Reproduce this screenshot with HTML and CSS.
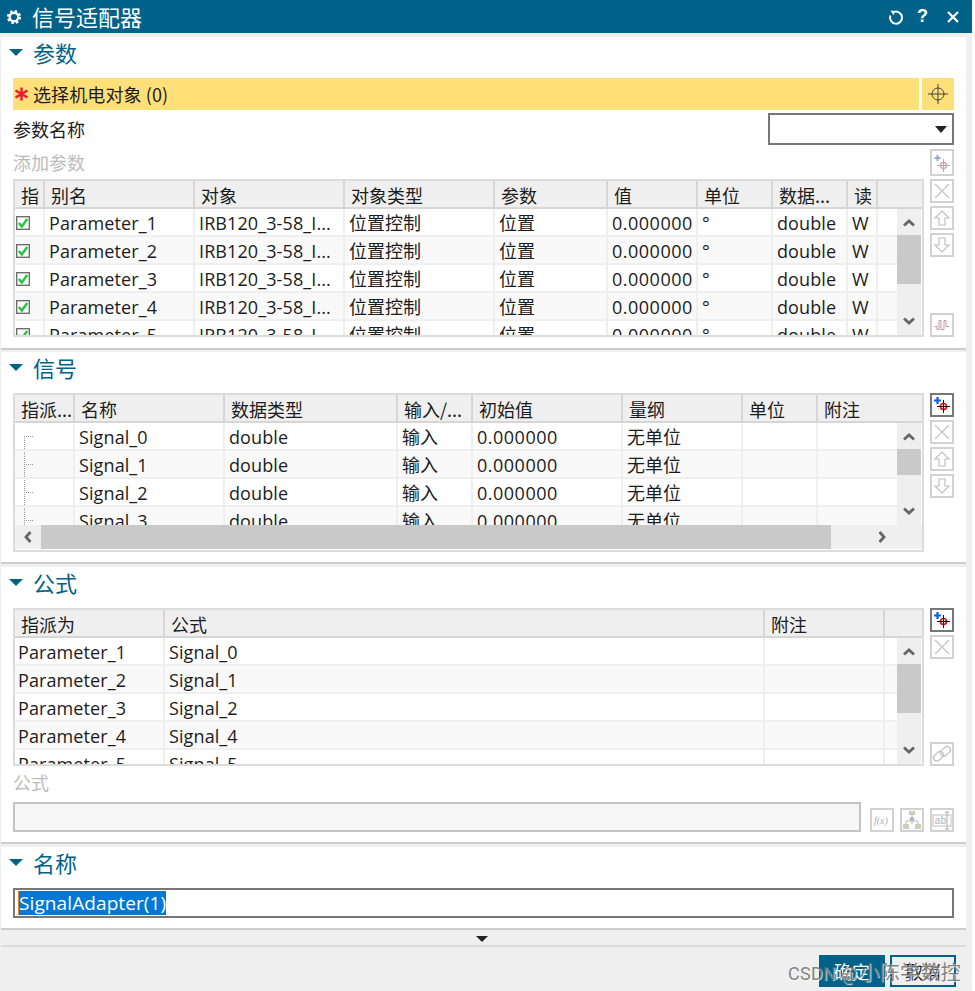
FILE: index.html
```html
<!DOCTYPE html>
<html lang="zh">
<head>
<meta charset="utf-8">
<title>信号适配器</title>
<link rel="stylesheet" href="styles.css">
</head>
<body>
<svg class="defs" width="0" height="0">
  <defs>
    <g id="i-add">
      <path d="M6.500 3v7M3 6.500h7" stroke="#0a5ee0" stroke-width="2.200" fill="none"/>
      <circle cx="12.500" cy="12.500" r="3" fill="none" stroke="#e01020" stroke-width="1.700"/>
      <path d="M12.500 6v13M6 12.500h13" stroke="#111" stroke-width="1"/>
    </g>
    <g id="i-add-off">
      <path d="M6.500 3v6M3.500 6h6" stroke="#9aa8cc" stroke-width="2" fill="none"/>
      <circle cx="12.500" cy="13.500" r="3" fill="none" stroke="#d8a8a8" stroke-width="1.400"/>
      <path d="M12.500 7v13M6 13.500h13" stroke="#b8a8a8" stroke-width="1"/>
    </g>
    <g id="i-x"><path d="M4 4l14 14M18 4L4 18" stroke="#c4c4c4" stroke-width="1.300" fill="none"/></g>
    <g id="i-up"><path d="M11 4l7 7h-4v7H8v-7H4z" stroke="#c0c0c0" stroke-width="1.200" fill="none"/></g>
    <g id="i-down"><path d="M11 18l7-7h-4V4H8v7H4z" stroke="#c0c0c0" stroke-width="1.200" fill="none"/></g>
    <g id="i-su"><path d="M1 6.500l5-4.500 5 4.500" stroke="#666" stroke-width="2.800" fill="none"/></g>
    <g id="i-sd"><path d="M1 1.500l5 4.500 5-4.500" stroke="#666" stroke-width="2.800" fill="none"/></g>
    <g id="i-check">
      <rect x=".7" y=".7" width="12.600" height="12.600" fill="#fff" stroke="#666" stroke-width="1.300"/>
      <path d="M2.800 7l3 3.500 5.400-7.500" fill="none" stroke="#1fc83c" stroke-width="2.400"/>
    </g>
  </defs>
</svg>

<div class="dialog">
  <header class="titlebar">
    <svg class="gear" width="16" height="16" viewBox="0 0 16 16"><circle cx="8" cy="8" r="4.300" fill="none" stroke="#fff" stroke-width="2.400"/><circle cx="8" cy="8" r="6" fill="none" stroke="#fff" stroke-width="2.200" stroke-dasharray="2.400 2.310"/></svg>
    <span class="title">信号适配器</span>
    <svg class="tb-icon" width="16" height="16" viewBox="0 0 16 16"><path d="M5.500 3.200A6 6 0 1 1 2.400 6.500" fill="none" stroke="#fff" stroke-width="2"/><path d="M2.500 1.500l4.500 .5-1.500 4.200z" fill="#fff"/></svg>
    <span class="help">?</span>
    <svg class="tb-icon" width="14" height="14" viewBox="0 0 14 14"><path d="M2 2l10 10M12 2L2 12" stroke="#fff" stroke-width="2.200"/></svg>
  </header>

  <section class="panel p1">
    <div class="sec"><i class="tri"></i><h2>参数</h2></div>
    <div class="select-row">
      <div class="sel-bar"><svg class="star" width="15" height="16" viewBox="0 0 15 16"><path d="M7.500 1.500v13M1.500 4.500l12 7M13.500 4.500l-12 7" stroke="#f01830" stroke-width="2.400"/></svg><span class="sel-text">选择机电对象 (0)</span></div>
      <div class="sel-btn"><svg width="22" height="22" viewBox="0 0 22 22"><circle cx="11" cy="11" r="6" fill="none" stroke="#444" stroke-width="1"/><path d="M11 1v20M1 11h20" stroke="#444" stroke-width="1"/></svg></div>
    </div>
    <div class="name-row">
      <span class="label">参数名称</span>
      <div class="combo"><i class="combo-tri"></i></div>
    </div>
    <div class="tbl-wrap">
      <div class="left">
        <div class="label off add-label">添加参数</div>
        <div class="tbl">
          <div class="row head cols1"><span class="c">指</span><span class="c">别名</span><span class="c">对象</span><span class="c">对象类型</span><span class="c">参数</span><span class="c">值</span><span class="c">单位</span><span class="c">数据...</span><span class="c">读</span><span class="c end"></span></div>
          <div class="body">
            <div class="rows">
              <div class="row cols1"><span class="c ck"><svg width="14" height="14"><use href="#i-check"/></svg></span><span class="c la">Parameter_1</span><span class="c la">IRB120_3-58_I...</span><span class="c">位置控制</span><span class="c">位置</span><span class="c num">0.000000</span><span class="c">°</span><span class="c la">double</span><span class="c">W</span><span class="c end"></span></div>
              <div class="row alt cols1"><span class="c ck"><svg width="14" height="14"><use href="#i-check"/></svg></span><span class="c la">Parameter_2</span><span class="c la">IRB120_3-58_I...</span><span class="c">位置控制</span><span class="c">位置</span><span class="c num">0.000000</span><span class="c">°</span><span class="c la">double</span><span class="c">W</span><span class="c end"></span></div>
              <div class="row cols1"><span class="c ck"><svg width="14" height="14"><use href="#i-check"/></svg></span><span class="c la">Parameter_3</span><span class="c la">IRB120_3-58_I...</span><span class="c">位置控制</span><span class="c">位置</span><span class="c num">0.000000</span><span class="c">°</span><span class="c la">double</span><span class="c">W</span><span class="c end"></span></div>
              <div class="row alt cols1"><span class="c ck"><svg width="14" height="14"><use href="#i-check"/></svg></span><span class="c la">Parameter_4</span><span class="c la">IRB120_3-58_I...</span><span class="c">位置控制</span><span class="c">位置</span><span class="c num">0.000000</span><span class="c">°</span><span class="c la">double</span><span class="c">W</span><span class="c end"></span></div>
              <div class="row cols1"><span class="c ck"><svg width="14" height="14"><use href="#i-check"/></svg></span><span class="c la">Parameter_5</span><span class="c la">IRB120_3-58_I...</span><span class="c">位置控制</span><span class="c">位置</span><span class="c num">0.000000</span><span class="c">°</span><span class="c la">double</span><span class="c">W</span><span class="c end"></span></div>
            </div>
            <div class="vs"><svg class="arrow" width="12" height="8"><use href="#i-su"/></svg><div class="vtrack"><div class="vthumb t1"></div></div><svg class="arrow" width="12" height="8"><use href="#i-sd"/></svg></div>
          </div>
        </div>
      </div>
      <div class="side side1">
        <div class="ib tall"><svg width="22" height="22"><use href="#i-add-off"/></svg></div>
        <div class="ib"><svg width="22" height="22"><use href="#i-x"/></svg></div>
        <div class="ib"><svg width="22" height="22"><use href="#i-up"/></svg></div>
        <div class="ib"><svg width="22" height="22"><use href="#i-down"/></svg></div>
        <div class="ib bottom"><svg width="22" height="22" viewBox="0 0 22 22"><path d="M3.500 12.500h2.500v3h2v-9h2v9h3v-9h2v6h3" fill="none" stroke="#c09a9a" stroke-width="1"/></svg></div>
      </div>
    </div>
  </section>

  <section class="panel p2">
    <div class="sec"><i class="tri"></i><h2>信号</h2></div>
    <div class="tbl-wrap">
      <div class="left">
        <div class="tbl t2">
          <div class="row head cols2"><span class="c">指派...</span><span class="c">名称</span><span class="c">数据类型</span><span class="c">输入/...</span><span class="c">初始值</span><span class="c">量纲</span><span class="c">单位</span><span class="c end">附注</span></div>
          <div class="body short">
            <div class="rows">
              <div class="row cols2"><span class="c tree first"></span><span class="c la">Signal_0</span><span class="c la">double</span><span class="c">输入</span><span class="c num">0.000000</span><span class="c">无单位</span><span class="c"></span><span class="c end"></span></div>
              <div class="row alt cols2"><span class="c tree"></span><span class="c la">Signal_1</span><span class="c la">double</span><span class="c">输入</span><span class="c num">0.000000</span><span class="c">无单位</span><span class="c"></span><span class="c end"></span></div>
              <div class="row cols2"><span class="c tree"></span><span class="c la">Signal_2</span><span class="c la">double</span><span class="c">输入</span><span class="c num">0.000000</span><span class="c">无单位</span><span class="c"></span><span class="c end"></span></div>
              <div class="row alt cols2"><span class="c tree"></span><span class="c la">Signal_3</span><span class="c la">double</span><span class="c">输入</span><span class="c num">0.000000</span><span class="c">无单位</span><span class="c"></span><span class="c end"></span></div>
            </div>
            <div class="vs"><svg class="arrow" width="12" height="8"><use href="#i-su"/></svg><div class="vtrack"><div class="vthumb t2th"></div></div><svg class="arrow" width="12" height="8"><use href="#i-sd"/></svg></div>
          </div>
          <div class="hs">
            <svg class="harrow" width="8" height="12" viewBox="0 0 8 12"><path d="M6.500 1L2 6l4.500 5" stroke="#666" stroke-width="2.800" fill="none"/></svg>
            <div class="hthumb"></div>
            <svg class="harrow right" width="8" height="12" viewBox="0 0 8 12"><path d="M1.500 1L6 6l-4.500 5" stroke="#666" stroke-width="2.800" fill="none"/></svg>
          </div>
        </div>
      </div>
      <div class="side">
        <div class="ib on"><svg width="22" height="22"><use href="#i-add"/></svg></div>
        <div class="ib"><svg width="22" height="22"><use href="#i-x"/></svg></div>
        <div class="ib"><svg width="22" height="22"><use href="#i-up"/></svg></div>
        <div class="ib"><svg width="22" height="22"><use href="#i-down"/></svg></div>
      </div>
    </div>
  </section>

  <section class="panel p3">
    <div class="sec"><i class="tri"></i><h2>公式</h2></div>
    <div class="tbl-wrap">
      <div class="left">
        <div class="tbl">
          <div class="row head cols3"><span class="c">指派为</span><span class="c">公式</span><span class="c">附注</span><span class="c end"></span></div>
          <div class="body">
            <div class="rows">
              <div class="row cols3"><span class="c la tight">Parameter_1</span><span class="c la">Signal_0</span><span class="c"></span><span class="c end"></span></div>
              <div class="row alt cols3"><span class="c la tight">Parameter_2</span><span class="c la">Signal_1</span><span class="c"></span><span class="c end"></span></div>
              <div class="row cols3"><span class="c la tight">Parameter_3</span><span class="c la">Signal_2</span><span class="c"></span><span class="c end"></span></div>
              <div class="row alt cols3"><span class="c la tight">Parameter_4</span><span class="c la">Signal_4</span><span class="c"></span><span class="c end"></span></div>
              <div class="row cols3"><span class="c la tight">Parameter_5</span><span class="c la">Signal_5</span><span class="c"></span><span class="c end"></span></div>
            </div>
            <div class="vs"><svg class="arrow" width="12" height="8"><use href="#i-su"/></svg><div class="vtrack"><div class="vthumb t1"></div></div><svg class="arrow" width="12" height="8"><use href="#i-sd"/></svg></div>
          </div>
        </div>
      </div>
      <div class="side side3">
        <div class="ib on"><svg width="22" height="22"><use href="#i-add"/></svg></div>
        <div class="ib"><svg width="22" height="22"><use href="#i-x"/></svg></div>
        <div class="ib bottom"><svg width="22" height="22" viewBox="0 0 22 22"><g fill="none" stroke="#c4c4c4" stroke-width="1.300"><rect x="2" y="10" width="11" height="6.500" rx="3.200" transform="rotate(-42 7.500 13.200)"/><rect x="9" y="5" width="11" height="6.500" rx="3.200" transform="rotate(-42 14.500 8.200)"/></g></svg></div>
      </div>
    </div>
    <div class="label off formula-label">公式</div>
    <div class="formula-row">
      <div class="formula-input"></div>
      <div class="ib"><svg width="22" height="22" viewBox="0 0 22 22"><text class="fx" x="3" y="15">f(x)</text></svg></div>
      <div class="ib"><svg width="22" height="22" viewBox="0 0 22 22"><rect x="8" y="2" width="6" height="4" fill="#cfcdb8"/><rect x="2" y="15" width="6" height="5" fill="#cfcdb8"/><rect x="14" y="15" width="6" height="5" fill="#cfcdb8"/><path d="M11 6v9M5 15v-3h12v3" stroke="#bbb" fill="none"/><path d="M11 7l3 3-3 3-3-3z" fill="#a9bdc9"/></svg></div>
      <div class="ib"><svg width="22" height="22" viewBox="0 0 22 22"><rect x="2" y="6" width="18" height="11" fill="none" stroke="#c0c0c0"/><text class="ab" x="3.500" y="15">ab</text><path d="M16 3v17M14 3h4M14 20h4" stroke="#aaa" fill="none"/></svg></div>
    </div>
  </section>

  <section class="panel p4">
    <div class="sec"><i class="tri"></i><h2>名称</h2></div>
    <div class="name-input"><span class="selected">SignalAdapter(1)</span></div>
  </section>

  <div class="expander"><i class="exp-tri"></i></div>
  <footer class="footer">
    <button class="btn primary">确定</button>
    <button class="btn">取消</button>
  </footer>
  <div class="watermark">CSDN @<span class="wm-cjk">小陈学数控</span></div>
</div>
</body>
</html>
```

FILE: styles.css
```css
* { box-sizing: border-box; }
html, body { margin: 0; padding: 0; background: #fff; }
body { width: 975px; height: 991px; overflow: hidden; font-family: "Open Sans", "Noto Sans CJK SC", sans-serif; font-size: 18px; color: #1c1c1c; }
.defs { position: absolute; }
.dialog { position: relative; width: 972px; height: 991px; background: #efefef; padding-right: 6px; }

.titlebar { width: 972px; height: 33px; background: #006288; color: #fff; display: flex; align-items: center; padding: 0 12px 0 6px; margin-bottom: 4px; }
.gear { margin-right: 10px; flex: none; }
.title { font-family: "Noto Sans CJK SC", sans-serif; font-size: 22px; line-height: 33px; flex: 1; }
.tb-icon { flex: none; }
.help { font-family: "Liberation Sans", sans-serif; font-weight: 700; font-size: 18px; margin: 0 19px 0 13px; width: 10px; text-align: center; }

.panel { margin-left: 1px; background: #fff; padding: 0 12px; border-bottom: 2px solid #cdcdcd; }
.p1 { height: 313px; margin-bottom: 2px; }
.p2 { height: 212px; margin-bottom: 3px; }
.p3 { height: 277px; margin-bottom: 3px; }
.p4 { height: 83px; }

.sec { height: 41px; display: flex; align-items: center; padding-bottom: 11px; }
.tri { width: 0; height: 0; border-left: 7px solid transparent; border-right: 7px solid transparent; border-top: 7px solid #006288; margin-left: -4px; margin-right: 10px; }
.sec h2 { margin: 0; font: 400 22px/30px "Noto Sans CJK SC", sans-serif; color: #006288; }

.select-row { display: flex; gap: 3px; height: 32px; }
.sel-bar { width: 906px; background: #ffdf78; display: flex; align-items: center; gap: 4px; padding-left: 1px; font-family: "Noto Sans CJK SC", sans-serif; font-size: 18px; }
.sel-text { letter-spacing: .1px; }
.sel-btn { width: 32px; background: #ffdf78; display: flex; align-items: center; justify-content: center; }

.name-row { display: flex; justify-content: space-between; align-items: center; height: 32px; margin-top: 3px; margin-bottom: 4px; }
.label { font-family: "Noto Sans CJK SC", sans-serif; font-size: 18px; line-height: 30px; }
.off { color: #bcbcbc; }
.combo { width: 186px; height: 32px; border: 2px solid #777; background: #fff; position: relative; }
.combo-tri { position: absolute; right: 5px; top: 11px; width: 0; height: 0; border-left: 6px solid transparent; border-right: 6px solid transparent; border-top: 7px solid #222; }

.tbl-wrap { display: flex; justify-content: space-between; }
.left { width: 911px; }
.add-label { height: 30px; line-height: 26px; }
.tbl { width: 911px; border: 2px solid #dcdcdc; background: #fff; font-size: 18px; }
.t2 { padding-bottom: 1px; }

.row { display: grid; height: 28px; border-bottom: 2px solid #efefef; background: #fff; }
.alt { background: #f9f9f9; }
.head { background: #efefef; border-bottom: 2px solid #d6d6d6; font-family: "Noto Sans CJK SC", sans-serif; }
.cols1 { grid-template-columns: 30px 150px 150px 150px 113px 90px 75px 75px 30px minmax(0, 1fr); }
.cols2 { grid-template-columns: 60px 150px 173px 75px 150px 120px 75px minmax(0, 1fr); }
.cols3 { grid-template-columns: 150px 600px 120px minmax(0, 1fr); }
.c { border-right: 2px solid #efefef; padding: 0 3px 0 4px; line-height: 28px; white-space: nowrap; overflow: hidden; }
.head .c { border-right-color: #d6d6d6; padding-left: 6px; line-height: 28px; }
.c.end { border-right: 0; }
.la { letter-spacing: .1px; }
.num { letter-spacing: .5px; }
.tight { padding-left: 3px; }
.ck { padding: 7px 0 0 1px; line-height: 0; }

.body { display: flex; height: 126px; overflow: hidden; }
.body.short { height: 102px; }
.rows { width: 882px; flex: none; }
.vs { width: 24px; background: #efefef; display: flex; flex-direction: column; align-items: center; }
.arrow { flex: none; margin: 10px 0 8px; }
.vs .arrow:last-child { margin: 8px 0 10px; }
.vtrack { flex: 1; width: 100%; }
.vthumb { background: #c9c9c9; width: 100%; }
.t1 { height: 49px; }
.t2th { height: 26px; }
.hs { display: flex; align-items: center; height: 24px; background: #efefef; }
.harrow { margin: 0 9px; flex: none; }
.hthumb { width: 790px; height: 24px; background: #c9c9c9; flex: none; }
.harrow.right { margin-left: 47px; }

.tree { position: relative; }
.tree::before { content: ""; position: absolute; left: 9px; top: -2px; bottom: -2px; border-left: 1px dotted #999; }
.tree.first::before { top: 13px; }
.tree::after { content: ""; position: absolute; left: 9px; top: 13px; width: 9px; border-top: 1px dotted #999; }

.side { width: 24px; display: flex; flex-direction: column; gap: 3px; }
.side1 { height: 188px; }
.side3 { height: 158px; }
.ib { width: 24px; height: 24px; flex: none; border: 2px solid #d2d2d2; background: #fff; display: flex; align-items: center; justify-content: center; }
.ib svg { flex: none; }
.ib.tall { height: 27px; }
.ib.on { border-color: #777; }
.ib.bottom { margin-top: auto; }
.fx { font: italic 10px "Liberation Serif", serif; fill: #b0b0b0; }
.ab { font: 10px "Liberation Mono", monospace; fill: #b0b0b0; }

.formula-label { margin-top: 3px; height: 33px; line-height: 26px; }
.formula-row { display: flex; align-items: flex-end; gap: 6px; height: 30px; }
.formula-input { width: 848px; height: 30px; border: 2px solid #c4c4c4; background: #f6f6f6; margin-right: 3px; }

.name-input { height: 30px; border: 2px solid #777; background: #fff; padding: 1px 3px; display: flex; align-items: center; }
.selected { background: #0078d7; color: #fff; height: 24px; line-height: 24px; font-size: 19px; letter-spacing: .1px; border-left: 1px solid #f07820; }

.expander { height: 17px; margin-left: 1px; border-bottom: 2px solid #dcdcdc; display: flex; justify-content: center; align-items: flex-end; padding: 0 3px 3px 0; }
.exp-tri { width: 0; height: 0; border-left: 6px solid transparent; border-right: 6px solid transparent; border-top: 6px solid #222; }

.footer { display: flex; justify-content: flex-end; gap: 5px; padding: 8px 10px 0 0; }
.btn { width: 66px; height: 32px; border: 2px solid #006288; background: transparent; color: #1c1c1c; font: 18px/26px "Noto Sans CJK SC", sans-serif; padding: 0; }
.primary { background: #006288; color: #fff; }

.watermark { position: absolute; left: 788px; top: 958px; font-family: "Roboto", sans-serif; font-size: 18px; line-height: 28px; letter-spacing: .3px; color: rgba(110,110,110,.85); text-shadow: 1px 1px 1px rgba(255,255,255,.8); white-space: nowrap; }
.wm-cjk { font-family: "Noto Sans CJK SC", sans-serif; font-size: 20px; margin-left: 2px; }
```
